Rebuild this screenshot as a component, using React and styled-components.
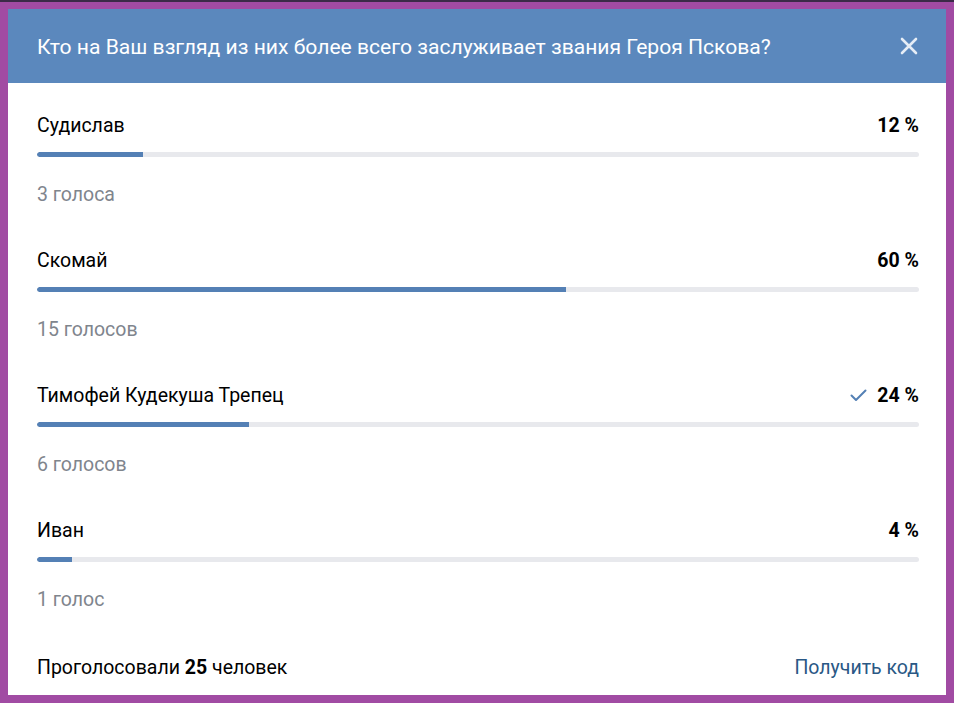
import React from "react";
import styled, { createGlobalStyle } from "styled-components";

const Global = createGlobalStyle`
  html, body { margin: 0; padding: 0; }
  body {
    background: #a14ba3;
    font-family: Roboto, "Noto Sans", Arial, sans-serif;
    -webkit-font-smoothing: antialiased;
  }
`;

const Frame = styled.div`
  height: 703px;
  box-sizing: border-box;
  border-top: 2px solid #3b2a48;
  padding: 7px 8px 8px;
  display: flex;
`;

const Card = styled.div`
  flex: 1;
  background: #fff;
  display: flex;
  flex-direction: column;
`;

const Header = styled.div`
  height: 74px;
  flex: none;
  background: #5b88bd;
  display: flex;
  align-items: center;
  justify-content: space-between;
  padding: 0 27px 0 29px;
`;

const Title = styled.div`
  color: #fff;
  font-size: 21.1px;
  font-weight: 400;
`;

const Close = styled.button`
  border: 0;
  background: none;
  padding: 0;
  width: 20px;
  height: 20px;
  display: flex;
  align-items: center;
  justify-content: center;
  cursor: pointer;
`;

const Body = styled.div`
  flex: 1;
  display: flex;
  flex-direction: column;
  padding: 30px 27px 16px 29px;
`;

const Row = styled.div`
  display: flex;
  flex-direction: column;
  margin-bottom: 41px;
  &:last-of-type { margin-bottom: 0; }
`;

const Line = styled.div`
  display: flex;
  align-items: center;
  justify-content: space-between;
  height: 24px;
  font-size: 19.5px;
  color: #000;
`;

const Percent = styled.div`
  display: flex;
  align-items: center;
  gap: 10px;
  font-weight: 700;
`;

const Track = styled.div`
  margin-top: 15px;
  height: 5px;
  border-radius: 3px;
  background: #e8e9ed;
  overflow: hidden;
`;

const Fill = styled.div`
  height: 100%;
  background: #5480b5;
  border-radius: 3px 0 0 3px;
`;

const Count = styled.div`
  margin-top: 26px;
  height: 24px;
  line-height: 24px;
  font-size: 19.5px;
  color: #7f858d;
`;

const Footer = styled.div`
  margin-top: auto;
  display: flex;
  justify-content: space-between;
  align-items: center;
  height: 24px;
  font-size: 19.5px;
  color: #000;
  b { font-weight: 700; }
`;

const Link = styled.a`
  color: #2a5885;
  text-decoration: none;
  cursor: pointer;
`;

const options = [
  { name: "Судислав", pct: 12, votes: "3 голоса" },
  { name: "Скомай", pct: 60, votes: "15 голосов" },
  { name: "Тимофей Кудекуша Трепец", pct: 24, votes: "6 голосов", mine: true },
  { name: "Иван", pct: 4, votes: "1 голос" },
];

const Check = () => (
  <svg width="17" height="13" viewBox="0 0 17 13">
    <polyline points="1.5,6.5 6,11 15.5,1.5" fill="none" stroke="#5480b5" strokeWidth="2" strokeLinecap="round" strokeLinejoin="round" />
  </svg>
);

export default function App() {
  return (
    <>
      <Global />
      <Frame>
        <Card>
          <Header>
            <Title>Кто на Ваш взгляд из них более всего заслуживает звания Героя Пскова?</Title>
            <Close aria-label="Закрыть">
              <svg width="18" height="18" viewBox="0 0 18 18">
                <path d="M2 2L16 16M16 2L2 16" stroke="#e6edf6" strokeWidth="2.6" strokeLinecap="round" />
              </svg>
            </Close>
          </Header>
          <Body>
            {options.map((o) => (
              <Row key={o.name}>
                <Line>
                  <span>{o.name}</span>
                  <Percent>
                    {o.mine && <Check />}
                    <span>{o.pct} %</span>
                  </Percent>
                </Line>
                <Track>
                  <Fill style={{ width: `${o.pct}%` }} />
                </Track>
                <Count>{o.votes}</Count>
              </Row>
            ))}
            <Footer>
              <span>
                Проголосовали <b>25</b> человек
              </span>
              <Link>Получить код</Link>
            </Footer>
          </Body>
        </Card>
      </Frame>
    </>
  );
}
